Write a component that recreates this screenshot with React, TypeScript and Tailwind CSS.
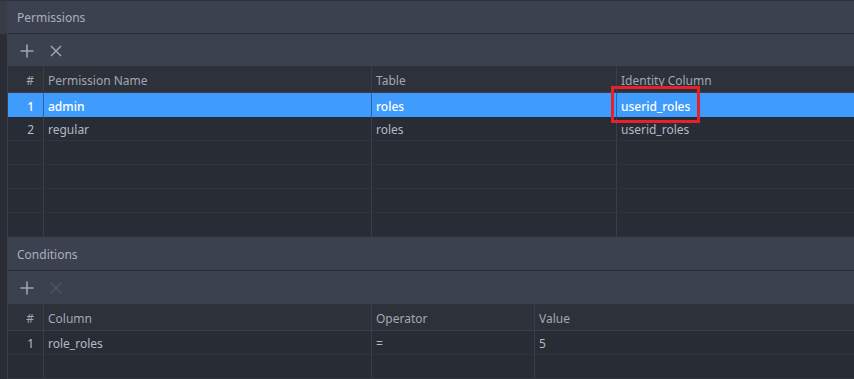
type Row = { id: number; cells: string[] };

const permCols = ["Permission Name", "Table", "Identity Column"];
const permRows: Row[] = [
  { id: 1, cells: ["admin", "roles", "userid_roles"] },
  { id: 2, cells: ["regular", "roles", "userid_roles"] },
];

const condCols = ["Column", "Operator", "Value"];
const condRows: Row[] = [{ id: 1, cells: ["role_roles", "=", "5"] }];

function PanelHeader({ title }: { title: string }) {
  return (
    <div className="h-[33px] flex items-center pt-[2px] px-[9px] bg-[#3c4150] border-b border-[#2b2e36] text-[12px] text-[#a9afbb]">
      {title}
    </div>
  );
}

function Toolbar({ canDelete }: { canDelete: boolean }) {
  return (
    <div className="h-[33px] flex items-center pl-[11px] pt-[1px] bg-[#3c4150]">
      <svg width="16" height="16" viewBox="0 0 16 16" className="text-[#9ea4b0]">
        <path d="M8 1.5v13M1.5 8h13" stroke="currentColor" strokeWidth="1.6" fill="none" />
      </svg>
      <svg
        width="14"
        height="14"
        viewBox="0 0 14 14"
        className={`ml-[14px] ${canDelete ? "text-[#9ea4b0]" : "text-[#4c5262]"}`}
      >
        <path d="M2 2l10 10M12 2L2 12" stroke="currentColor" strokeWidth="1.5" fill="none" />
      </svg>
    </div>
  );
}

function Grid({
  cols,
  rows,
  widths,
  total,
  selected,
}: {
  cols: string[];
  rows: Row[];
  widths: string;
  total: number;
  selected?: number;
}) {
  const blanks = Array.from({ length: total - rows.length }, (_, i) => i);
  return (
    <div className="flex flex-col">
      <div className={`grid ${widths} h-[27px] bg-[#2d3139] border-b border-[#3a3e48] text-[12px] text-[#a2a8b3]`}>
        <div className="flex items-center justify-end pt-[3px] pr-[9px] border-r border-[#3a3e48]">#</div>
        {cols.map((c, i) => (
          <div
            key={c}
            className={`flex items-center pt-[3px] pl-[4px] ${i < cols.length - 1 ? "border-r border-[#3a3e48]" : ""}`}
          >
            {c}
          </div>
        ))}
      </div>
      {rows.map((r) => {
        const sel = r.id === selected;
        return (
          <div
            key={r.id}
            className={`grid ${widths} h-[24px] text-[12px] ${
              sel ? "bg-[#3f9cfd] text-white font-medium" : "bg-[#282c34] text-[#b4b9c2] border-b border-[#30343d]"
            }`}
          >
            <div
              className={`flex items-center justify-end pt-[3px] pr-[9px] border-r ${
                sel ? "border-[#2a64a8]" : "border-[#3a3e48]"
              }`}
            >
              {r.id}
            </div>
            {r.cells.map((c, i) => (
              <div
                key={i}
                className={`flex items-center pt-[3px] pl-[4px] ${
                  i < r.cells.length - 1 ? `border-r ${sel ? "border-[#2a64a8]" : "border-[#3a3e48]"}` : ""
                }`}
              >
                {c}
              </div>
            ))}
          </div>
        );
      })}
      {blanks.map((b) => (
        <div key={b} className={`grid ${widths} h-[24px] bg-[#282c34] border-b border-[#30343d]`}>
          <div className="border-r border-[#3a3e48]" />
          {cols.map((c, i) => (
            <div key={c} className={i < cols.length - 1 ? "border-r border-[#3a3e48]" : ""} />
          ))}
        </div>
      ))}
    </div>
  );
}

export default function App() {
  return (
    <div
      className="w-[854px] h-[379px] overflow-hidden flex bg-[#282c34]"
      style={{ fontFamily: '"Noto Sans", "Open Sans", sans-serif' }}
    >
      <div className="w-[8px] flex flex-col border-r border-[#3b3f4a]">
        <div className="h-[34px] bg-[#383c47] border-t border-[#2f323a]" />
        <div className="flex-1 bg-[#2a2d35]" />
      </div>
      <div className="flex-1 flex flex-col relative border-t border-[#2f323a]">
        <PanelHeader title="Permissions" />
        <Toolbar canDelete />
        <Grid
          cols={permCols}
          rows={permRows}
          widths="grid-cols-[36px_328px_245px_1fr]"
          total={6}
          selected={1}
        />
        <div className="border-t border-[#3b3f4a]">
          <PanelHeader title="Conditions" />
        </div>
        <Toolbar canDelete={false} />
        <Grid
          cols={condCols}
          rows={condRows}
          widths="grid-cols-[36px_328px_163px_1fr]"
          total={2}
        />
        <div className="absolute left-[603px] top-[85px] w-[89px] h-[37px] border-[3px] border-[#e8202a]" />
      </div>
    </div>
  );
}
